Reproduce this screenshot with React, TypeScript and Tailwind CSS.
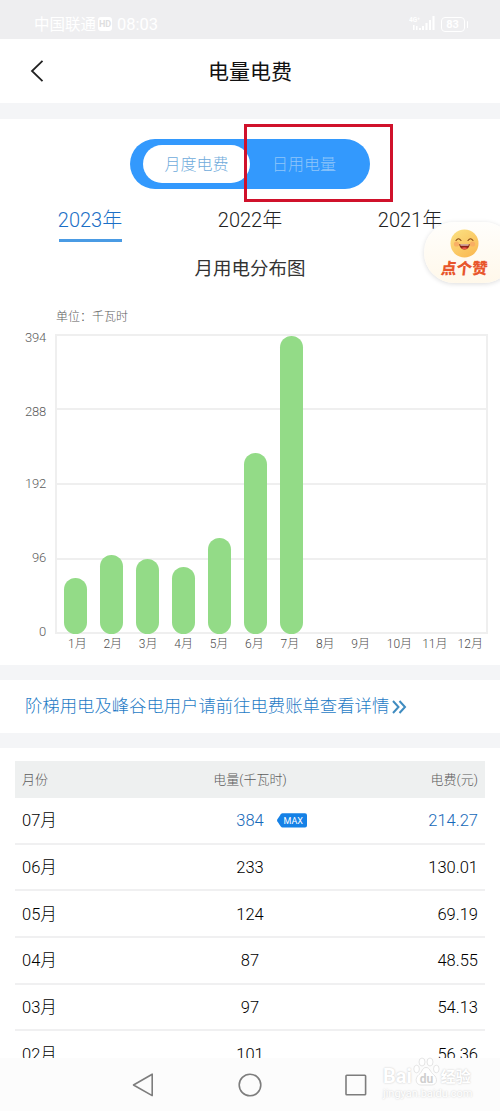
interface UsageRow {
  month: string
  kwh: number
  fee: string
  isMax?: boolean
}

const YEARS = ['2023年', '2022年', '2021年']

const TICKS = [
  { label: '394', cls: 'top-[-6px]' },
  { label: '288', cls: 'top-[68px]' },
  { label: '192', cls: 'top-[140px]' },
  { label: '96', cls: 'top-[214px]' },
  { label: '0', cls: 'top-[288px]' }
]

// Bar heights in px, January to July
const BARS = [56, 79, 75, 67, 96, 181, 298]

const MONTHS = Array.from({ length: 12 }, (_, i) => `${i + 1}月`)

const ROWS: UsageRow[] = [
  { month: '07月', kwh: 384, fee: '214.27', isMax: true },
  { month: '06月', kwh: 233, fee: '130.01' },
  { month: '05月', kwh: 124, fee: '69.19' },
  { month: '04月', kwh: 87, fee: '48.55' },
  { month: '03月', kwh: 97, fee: '54.13' },
  { month: '02月', kwh: 101, fee: '56.36' }
]

function StatusBar() {
  return (
    <div className="flex h-[39px] shrink-0 items-center bg-[#eeeef0] pt-[9px] pr-[32px] pl-[34px] font-normal text-white">
      <span className="pt-[2px] text-[15.5px] leading-5">中国联通</span>
      <span className="ml-[2px] flex h-[14px] w-[14px] items-center justify-center rounded-[3px] bg-white text-[9px] leading-none font-bold text-[#dedee0]">
        HD
      </span>
      <span className="ml-[5px] pt-px text-[16.5px] leading-5">08:03</span>
      <svg className="ml-auto" width="28" height="16" viewBox="0 0 28 16" fill="white">
        <text x="0" y="6" fontSize="6.5" fontWeight="700">
          4G⁺
        </text>
        <rect x="4" y="9" width="1.5" height="5" />
        <rect x="7" y="10" width="1.5" height="4" />
        <rect x="10" y="12" width="2" height="2" />
        <rect x="13" y="10" width="2" height="4" />
        <rect x="16.5" y="7" width="2" height="7" />
        <rect x="20" y="4" width="2" height="10" />
        <rect x="23.5" y="0" width="2" height="14" />
      </svg>
      <span className="ml-[4px] flex h-[15px] w-[24px] items-center justify-center rounded-[4px] border-[1.5px] border-white text-[11px] leading-none font-bold">
        83
      </span>
      <span className="ml-[2px] h-[7px] w-[1.5px] rounded bg-white" />
    </div>
  )
}

function Header() {
  return (
    <div className="grid h-[64px] shrink-0 grid-cols-[60px_1fr_60px] items-center bg-white">
      <svg className="ml-[30px]" width="14" height="22" viewBox="0 0 14 22" fill="none" stroke="#222" strokeWidth="1.8">
        <path d="M12.5 0.8 L2 11 L12.5 21.2" />
      </svg>
      <h1 className="pt-px text-center text-[21px] leading-7 font-normal text-[#111]">电量电费</h1>
    </div>
  )
}

function ModeSwitch() {
  return (
    <div className="relative mx-auto flex h-[50px] w-[240px] items-center rounded-full bg-[#3399fd] pl-[13px] text-[16px]">
      <div className="flex h-[38px] w-[107px] items-center justify-center rounded-full bg-white pt-[2px] text-[#6fabdb]">
        月度电费
      </div>
      <div className="ml-[22px] pt-[2px] text-[#8fc6fa]">日用电量</div>
      <div className="absolute top-[-15px] left-[114px] h-[78px] w-[149px] border-[3px] border-[#d0112b]" />
    </div>
  )
}

function UsageChart() {
  return (
    <div className="mt-[8px] ml-[55px] w-[433px]">
      <div className="relative flex h-[300px] items-end gap-[13px] border-2 border-[#efefef] pl-[7px]">
        <div className="absolute inset-0 flex flex-col">
          <div className="h-[74px] border-b-2 border-[#efefef]" />
          <div className="h-[75px] border-b-2 border-[#efefef]" />
          <div className="h-[75px] border-b-2 border-[#efefef]" />
        </div>
        {TICKS.map((t) => (
          <span
            key={t.label}
            className={`absolute right-[440px] text-[13px] leading-4 tracking-[-0.2px] text-[#5c5c5c] ${t.cls}`}
          >
            {t.label}
          </span>
        ))}
        {BARS.map((h, i) => (
          <div
            key={i}
            className="relative -mb-[2px] w-[23px] rounded-full bg-[#93db87]"
            style={{ height: h }}
          />
        ))}
      </div>
      <div className="mt-[2px] ml-[13px] grid w-[425px] grid-cols-12 text-[12px] leading-4 text-[#4c4c4c]">
        {MONTHS.map((m) => (
          <span key={m}>{m}</span>
        ))}
      </div>
    </div>
  )
}

function LikeButton() {
  return (
    <div className="absolute top-[222px] left-[424px] flex h-[61px] w-[90px] flex-col items-start rounded-full bg-gradient-to-b from-[#fffefc] to-[#fff8ea] pt-[7px] shadow-[0_1px_5px_rgba(0,0,0,0.14)]">
      <svg className="ml-[26px]" width="29" height="29" viewBox="0 0 29 29">
        <defs>
          <linearGradient id="face" x1="0" y1="0" x2="0.7" y2="1">
            <stop offset="0" stopColor="#fbe283" />
            <stop offset="1" stopColor="#fabb55" />
          </linearGradient>
        </defs>
        <circle cx="14.5" cy="14.5" r="14" fill="url(#face)" />
        <circle cx="6.5" cy="15" r="2.6" fill="#f9a763" opacity="0.8" />
        <circle cx="22.5" cy="15" r="2.6" fill="#f9a763" opacity="0.8" />
        <path d="M6 11.5 Q8.5 8 11 11.5 M18 11.5 Q20.5 8 23 11.5" fill="none" stroke="#8a4a16" strokeWidth="1.1" strokeLinecap="round" />
        <path d="M9 15.2 H20 Q18.5 20.5 14.5 20.5 Q10.5 20.5 9 15.2 Z" fill="#8a2418" />
        <path d="M11.4 19 Q14.5 17.4 17.6 19 Q14.5 21.4 11.4 19 Z" fill="#f0574b" />
        <path d="M10.2 15.5 H18.8 L18.4 16.5 H10.6 Z" fill="#fff" />
      </svg>
      <span className="ml-[17px] pt-px -skew-x-6 text-[15.5px] leading-[20px] font-black text-[#e8562c]">点个赞</span>
    </div>
  )
}

function UsageTable() {
  return (
    <div className="min-h-0 flex-1 overflow-hidden bg-white px-[15px] pt-[13px]">
      <div className="grid h-[37px] grid-cols-3 items-center bg-[#eef0f0] px-[7px] text-[13px] text-[#5c5c5c]">
        <span>月份</span>
        <span className="text-center">电量(千瓦时)</span>
        <span className="text-right">电费(元)</span>
      </div>
      {ROWS.map((r) => (
        <div
          key={r.month}
          className="grid h-[46.7px] grid-cols-3 items-center border-b-2 border-[#f0f0f1] px-[7px] pt-[2.5px] text-[16.5px] text-black"
        >
          <span>{r.month}</span>
          <span className={r.isMax ? 'relative text-center text-[#1568b8]' : 'text-center'}>
            {r.kwh}
            {r.isMax && <MaxTag />}
          </span>
          <span className={r.isMax ? 'text-right text-[#1568b8]' : 'text-right'}>{r.fee}</span>
        </div>
      ))}
    </div>
  )
}

function MaxTag() {
  return (
    <svg className="absolute top-[4px] left-[103px]" width="30" height="15" viewBox="0 0 30 15">
      <path d="M5.5 0.3 H28 Q30 0.3 30 2.3 V12.4 Q30 14.4 28 14.4 H5.5 Q4.5 14.4 3.8 13.5 L0.4 8.5 Q-0.3 7.4 0.4 6.3 L3.8 1.2 Q4.5 0.3 5.5 0.3 Z" fill="#1581e6" />
      <text x="6.5" y="10.8" fontSize="9" fontWeight="400" fill="white">
        MAX
      </text>
    </svg>
  )
}

function NavBar() {
  return (
    <div className="relative flex h-[53px] shrink-0 items-center bg-[#fcfcfc] pl-[132px]">
      <svg width="236" height="24" viewBox="0 0 236 24" fill="none" stroke="#7d7d7d" strokeWidth="1.6" strokeLinejoin="round">
        <path d="M20.2 1.2 V22.6 L1.5 12 Z" />
        <circle cx="118" cy="12" r="10.8" />
        <rect x="214" y="2.2" width="19.6" height="19.6" rx="0.8" />
      </svg>
      <Watermark />
    </div>
  )
}

function Watermark() {
  return (
    <div className="absolute top-px left-[383px] w-[92px] font-bold text-white [text-shadow:0_0_2px_#c4c4c4]">
      <div className="flex h-[27px] items-end">
        <span className="text-[20px] leading-[20px]">Bai</span>
        <svg className="ml-px" width="27" height="29" viewBox="0 0 27 29" fill="white" stroke="#dedede" strokeWidth="0.8">
          <ellipse cx="3.6" cy="12" rx="2.8" ry="3.8" />
          <ellipse cx="9" cy="5" rx="3" ry="4" />
          <ellipse cx="17" cy="5" rx="3" ry="4" />
          <ellipse cx="23.3" cy="12" rx="2.8" ry="3.8" />
          <path d="M13 10.5 C9 10.5 9.5 15 6 17.5 C1.5 21 2.5 28 8 28 H18.5 C24.5 28 25 21 20.5 17.5 C17 15 17 10.5 13 10.5 Z" />
          <text x="6.8" y="25.5" fontSize="12" fill="#cfcfcf" stroke="none" className="[text-shadow:none]">
            du
          </text>
        </svg>
        <span className="ml-px text-[15px] leading-[17px]">经验</span>
      </div>
      <div className="mt-[2px] text-[11px] leading-[12px] font-normal whitespace-nowrap">jingyan.baidu.com</div>
    </div>
  )
}

export default function App() {
  return (
    <div className="relative flex h-[1111px] w-[500px] flex-col overflow-hidden bg-[#f4f5f7] font-['Roboto','Noto_Sans_CJK_SC',sans-serif] font-light">
      <StatusBar />
      <Header />
      <section className="mt-[16px] h-[546px] shrink-0 bg-white pt-[20px]">
        <ModeSwitch />
        <div className="mt-[17px] ml-[10px] grid w-[480px] grid-cols-3 text-[20px] leading-[28px] text-[#222]">
          {YEARS.map((y, i) => (
            <div key={y} className="flex flex-col items-center">
              <span className={i === 0 ? 'text-[#1b6fc6]' : ''}>{y}</span>
              <span className={i === 0 ? 'mt-[5px] h-[3px] w-[63px] bg-[#4a9be4]' : 'mt-[5px] h-[3px]'} />
            </div>
          ))}
        </div>
        <h2 className="mt-[13px] text-center text-[18.5px] leading-[28px] font-normal text-[#333]">月用电分布图</h2>
        <div className="mt-[25px] ml-[56px] text-[12px] leading-[18px] text-[#5c5c5c]">单位：千瓦时</div>
        <UsageChart />
      </section>
      <div className="mt-[15px] flex h-[53px] shrink-0 items-center bg-white pl-[25px] text-[17.35px] text-[#1f7cc6]">
        <span>阶梯用电及峰谷电用户请前往电费账单查看详情</span>
        <svg className="ml-[3px]" width="15" height="14" viewBox="0 0 15 14" fill="none" stroke="#3f8cc0" strokeWidth="2">
          <path d="M1 1 L6.5 7 L1 13 M7.5 1 L13 7 L7.5 13" />
        </svg>
      </div>
      <div className="h-[15px] shrink-0" />
      <UsageTable />
      <NavBar />
      <LikeButton />
    </div>
  )
}
